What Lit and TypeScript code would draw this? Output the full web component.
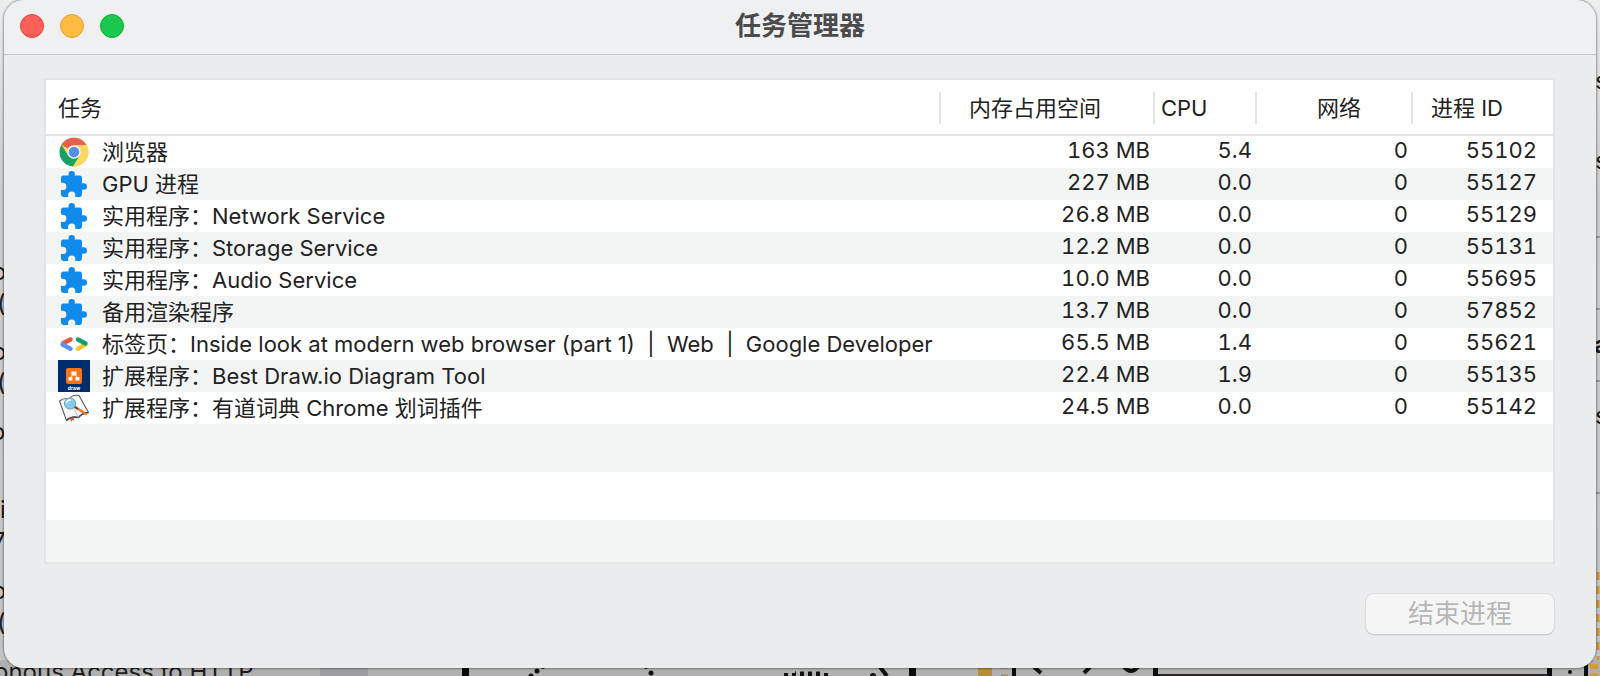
import { LitElement, html, svg, css } from "lit";
import { customElement } from "lit/decorators.js";

type IconName = "chrome" | "puzzle" | "dev" | "draw" | "dict";

interface Task {
  icon: IconName;
  name: string;
  memory: string;
  cpu: string;
  network: string;
  pid: string;
}

const TASKS: Task[] = [
  { icon: "chrome", name: "浏览器", memory: "163 MB", cpu: "5.4", network: "0", pid: "55102" },
  { icon: "puzzle", name: "GPU 进程", memory: "227 MB", cpu: "0.0", network: "0", pid: "55127" },
  { icon: "puzzle", name: "实用程序：Network Service", memory: "26.8 MB", cpu: "0.0", network: "0", pid: "55129" },
  { icon: "puzzle", name: "实用程序：Storage Service", memory: "12.2 MB", cpu: "0.0", network: "0", pid: "55131" },
  { icon: "puzzle", name: "实用程序：Audio Service", memory: "10.0 MB", cpu: "0.0", network: "0", pid: "55695" },
  { icon: "puzzle", name: "备用渲染程序", memory: "13.7 MB", cpu: "0.0", network: "0", pid: "57852" },
  { icon: "dev", name: "标签页：Inside look at modern web browser (part 1)  |  Web  |  Google Developer", memory: "65.5 MB", cpu: "1.4", network: "0", pid: "55621" },
  { icon: "draw", name: "扩展程序：Best Draw.io Diagram Tool", memory: "22.4 MB", cpu: "1.9", network: "0", pid: "55135" },
  { icon: "dict", name: "扩展程序：有道词典 Chrome 划词插件", memory: "24.5 MB", cpu: "0.0", network: "0", pid: "55142" },
];

const ICONS = {
  chrome: svg`
    <circle cx="16" cy="16" r="14.5" fill="#fdd65c"/>
    <path d="M16 16 L3.4 8.8 A14.5 14.5 0 0 1 28.6 9.2 L16 9.2 Z" fill="#e5604f"/>
    <path d="M3.4 8.8 A14.5 14.5 0 0 0 15 30.5 L22 19.2 L10 19 Z" fill="#14a566"/>
    <path d="M28.6 9.2 H16 L22 19.2 L15 30.5 A14.5 14.5 0 0 0 28.6 9.2 Z" fill="#fdd65c"/>
    <circle cx="16" cy="16" r="6.8" fill="#f5f5f5"/>
    <circle cx="16" cy="16" r="5.3" fill="#4f92f0"/>`,
  puzzle: svg`
    <path d="M5.4 7.600 H10.500 V6.300 A3.200 3.200 0 0 1 16.900 6.300 V7.600 H21.600 A2.400 2.400 0 0 1 24 10 V15.300 H25.800 A3.200 3.200 0 0 1 25.800 21.700 H24 V26.600 A2.400 2.400 0 0 1 21.600 29 H17.300 V27.200 A3.600 3.600 0 0 0 10.100 27.200 V29 H5.400 A2.400 2.400 0 0 1 3 26.600 V22.100 H4.700 A3.700 3.700 0 0 0 4.700 14.700 H3 V10 A2.400 2.400 0 0 1 5.400 7.600 Z" fill="#0f8bee"/>`,
  dev: svg`
    <g fill="none" stroke-width="4.400" stroke-linecap="round">
      <path d="M12.500 11.500 L5.500 15" stroke="#ea5545"/>
      <path d="M4.500 16.500 L12.500 20.800" stroke="#5596f5"/>
      <path d="M27.500 16.200 L20 20.800" stroke="#fcc629"/>
      <path d="M20 11.500 L27.500 15.500" stroke="#0aa566"/>
    </g>`,
  draw: svg`
    <rect width="32" height="32" fill="#002e6c"/>
    <rect x="8" y="8" width="16" height="16" rx="2" fill="#fb7314"/>
    <path d="M15 14 L12.500 18 M17 14 L19.500 18" stroke="#ffd9bd" stroke-width="1"/>
    <rect x="13.500" y="11.500" width="5" height="4" fill="#fff"/>
    <rect x="10.500" y="17" width="4" height="3.500" fill="#fff"/>
    <rect x="17.500" y="17" width="4" height="3.500" fill="#fff"/>
    <text x="16" y="29.500" text-anchor="middle" font-size="5" font-weight="700" fill="#fff">draw</text>`,
  dict: svg`
    <path d="M1.500 9 Q6 5.500 11 7 Q14.500 2.500 21 3.500 L30.500 20.500 Q24 21 20.500 25.500 Q13 24 8.500 28.500 Z" fill="#f8f8f8" stroke="#5c5c5c" stroke-width="1.100" stroke-linejoin="round"/>
    <path d="M8.500 28.500 Q13 24 20.500 25.500 Q24 21 30.500 20.500" fill="none" stroke="#4a4a4a" stroke-width="1.700"/>
    <path d="M11 7 L20.500 25.500" stroke="#c4c4c4" stroke-width="1"/>
    <path d="M12 26.300 L15.500 25.500 L16.500 29 L14.300 28 L13 30 Z" fill="#e4572e"/>
    <path d="M17 15 L28 22" stroke="#f0742c" stroke-width="2.600" stroke-linecap="round"/>
    <path d="M16 14.500 L20 17" stroke="#44515c" stroke-width="2"/>
    <circle cx="12" cy="11.500" r="5.600" fill="#84caf2" stroke="#7d9aad" stroke-width="1"/>
    <path d="M8.500 11 A4 4 0 0 1 13 8" stroke="#e5f6ff" stroke-width="1.800" fill="none"/>`,
};

@customElement("task-icon")
class TaskIcon extends LitElement {
  static properties = { name: { type: String } };
  declare name: IconName;

  static styles = css`
    :host { display: block; flex: none; width: 32px; height: 32px; }
    .glyph { display: block; width: 100%; height: 100%; font-family: Inter, sans-serif; }
  `;

  render() {
    return html`<svg class="glyph" viewBox="0 0 32 32" aria-hidden="true">${ICONS[this.name]}</svg>`;
  }
}

@customElement("desk-backdrop")
class DeskBackdrop extends LitElement {
  static styles = css`
    :host { display: block; }
    .scene { display: block; width: 100%; height: 100%; font-family: Inter, "Liberation Sans", sans-serif; }
  `;

  render() {
    return html`
      <svg class="scene" viewBox="0 0 1600 676" preserveAspectRatio="xMidYMax slice" aria-hidden="true">
        <defs>
          <linearGradient id="shade" x1="0" y1="0" x2="0" y2="1">
            <stop offset="0" stop-color="#ededed"/>
            <stop offset="0.25" stop-color="#cfcfcf"/>
            <stop offset="1" stop-color="#c4c4c4"/>
          </linearGradient>
        </defs>
        <rect width="1600" height="676" fill="url(#shade)"/>
        <rect y="660" width="1600" height="16" fill="#b0b0b0"/>
        <rect x="320" y="660" width="48" height="16" fill="#9c9ea1"/>
        <g font-size="24" fill="#1c1c1c">
          <text x="-8" y="280">o</text><text x="-3" y="312">(</text>
          <text x="-8" y="360">o</text><text x="-3" y="391">(</text>
          <text x="-9" y="440">o</text>
          <text x="0" y="518">i</text><text x="-8" y="550">7</text>
          <text x="-8" y="599">o</text><text x="-3" y="631">(</text>
          <text x="-6" y="680">onous Access to HTTP</text>
          <text x="1595" y="89">s</text><text x="1595" y="169">s</text>
          <text x="1594" y="353" font-weight="700">a</text><text x="1595" y="424">s</text>
        </g>
        <path d="M1596 237 H1600 M1596 309 H1600 M1596 381 H1600 M1596 493 H1600" stroke="#9a9a9a" stroke-width="2"/>
        <g fill="#0b0b0b">
          <rect x="462" y="667" width="7" height="9"/>
          <rect x="909" y="667" width="7" height="9"/>
          <rect x="1012" y="667" width="4" height="9"/>
          <rect x="1153" y="667" width="5" height="9"/>
          <rect x="1547" y="667" width="5" height="9"/>
          <rect x="1584" y="660" width="4" height="16"/>
        </g>
        <rect x="1158" y="674" width="390" height="2" fill="#29262b"/>
        <g fill="#111">
          <circle cx="531" cy="676" r="2.500"/><circle cx="537" cy="671" r="2.500"/><circle cx="543" cy="667" r="2"/>
          <circle cx="646" cy="667" r="2"/><circle cx="651" cy="673" r="2.500"/>
          <circle cx="873" cy="676" r="3"/><circle cx="1570" cy="672" r="2"/>
        </g>
        <path d="M784 675 H832" stroke="#111" stroke-width="4" stroke-dasharray="4 4"/>
        <path d="M795 673 H822" stroke="#111" stroke-width="3" stroke-dasharray="4 4" stroke-dashoffset="3"/>
        <g fill="none" stroke="#111" stroke-width="4">
          <path d="M880 667 L887 676 M1034 667 L1041 673 M1090 667 L1084 673 M1124 667 Q1131 675 1138 667"/>
        </g>
        <rect x="978" y="667" width="14" height="9" fill="#b98b34"/>
        <path d="M1001 667 H1008 M1001 676 H1008" stroke="#b98b34" stroke-width="3"/>
        <path d="M1598 572 V660" stroke="#cf9330" stroke-width="3" stroke-dasharray="8 6"/>
        <path d="M1594 664 V676" stroke="#d99a2e" stroke-width="8" stroke-dasharray="5 4"/>
      </svg>`;
  }
}

@customElement("app-root")
class AppRoot extends LitElement {
  static styles = css`
    :host {
      display: block;
      position: relative;
      overflow: hidden;
      min-height: 100vh;
      box-sizing: border-box;
      padding: 0 4px 8px;
      color: #222;
      font: 22px/32px Inter, "Noto Sans CJK SC", sans-serif;
    }
    *, *::before { box-sizing: border-box; }
    .backdrop { position: absolute; inset: 0; }
    .window {
      position: relative;
      display: flex;
      flex-direction: column;
      min-height: calc(100vh - 8px);
      border-radius: 20px;
      background: #ebecee;
      box-shadow: 0 0 2px 1px rgba(0, 0, 0, 0.35);
      overflow: hidden;
    }
    .titlebar {
      display: grid;
      grid-template-columns: 1fr auto 1fr;
      align-items: center;
      height: 55px;
      padding: 0 16px 2px;
      background: #eff0f2;
      border-bottom: 1px solid #c6c7c9;
    }
    .lights { display: flex; gap: 16px; }
    .light { width: 24px; height: 24px; padding: 0; border-radius: 50%; border: 1px solid; }
    .close { background: #ff5f57; border-color: #e2463f; }
    .minimize { background: #febc40; border-color: #dfa035; }
    .zoom { background: #19c84c; border-color: #12ac33; }
    .title { margin: 0; font-size: 26px; line-height: 32px; font-weight: 700; color: #4b4b4c; }
    .content { flex: 1; display: flex; flex-direction: column; padding: 23px 41px 34px 40px; }
    .frame { flex: 1; display: flex; flex-direction: column; border: 2px solid #e2e4e4; background: #fff; }
    .tasks { width: 100%; table-layout: fixed; border-collapse: separate; border-spacing: 0; }
    .col-memory { width: 214px; }
    .col-cpu { width: 102px; }
    .col-network { width: 156px; }
    .col-pid { width: 142px; }
    th { height: 56px; padding: 2px 0 0; border-bottom: 2px solid #e2e4e4; font-weight: 400; text-align: left; }
    .label { display: block; padding-left: 12px; }
    .label.memory, .label.cpu, .label.network, .label.pid { border-left: 2px solid #e2e4e4; }
    .label.memory { padding-left: 28px; }
    .label.cpu { padding-left: 6px; }
    .label.network { padding-left: 60px; }
    .label.pid { padding-left: 18px; }
    td { height: 32px; padding: 0 3px 4px 0; line-height: 28px; text-align: right; white-space: pre; font-variant-numeric: tabular-nums; }
    td.name { padding: 0; font-variant-numeric: normal; }
    td.pid { padding-right: 16px; }
    .task { display: flex; gap: 12px; padding-left: 12px; line-height: 32px; text-align: left; }
    .text { flex: 1; overflow: hidden; }
    tbody tr:nth-child(even) { background: #f3f5f4; }
    .blank {
      flex: 1;
      background: repeating-linear-gradient(#f3f5f4 0 48px, #fff 48px 96px);
    }
    .actions { display: flex; justify-content: flex-end; padding: 30px 1px 0 0; }
    .end {
      width: 188px;
      height: 40px;
      padding: 0;
      border: 0;
      border-radius: 8px;
      background: #f5f5f5;
      box-shadow: 0 0 1px 1px rgba(0, 0, 0, 0.06), 0 1px 2px rgba(0, 0, 0, 0.12);
      color: #b7b7b7;
      font: 26px/36px Inter, "Noto Sans CJK SC", sans-serif;
    }
  `;

  render() {
    return html`
      <desk-backdrop class="backdrop"></desk-backdrop>
      <main class="window">
        <header class="titlebar">
          <div class="lights">
            <button class="light close" aria-label="关闭"></button>
            <button class="light minimize" aria-label="最小化"></button>
            <button class="light zoom" aria-label="缩放"></button>
          </div>
          <h1 class="title">任务管理器</h1>
        </header>
        <section class="content">
          <div class="frame">
            <table class="tasks">
              <colgroup>
                <col><col class="col-memory"><col class="col-cpu"><col class="col-network"><col class="col-pid">
              </colgroup>
              <thead>
                <tr>
                  <th scope="col"><span class="label">任务</span></th>
                  <th scope="col"><span class="label memory">内存占用空间</span></th>
                  <th scope="col"><span class="label cpu">CPU</span></th>
                  <th scope="col"><span class="label network">网络</span></th>
                  <th scope="col"><span class="label pid">进程 ID</span></th>
                </tr>
              </thead>
              <tbody>
                ${TASKS.map(
                  (t) => html`<tr>
                    <td class="name"><div class="task"><task-icon .name=${t.icon}></task-icon><span class="text">${t.name}</span></div></td>
                    <td>${t.memory}</td>
                    <td>${t.cpu}</td>
                    <td>${t.network}</td>
                    <td class="pid">${t.pid}</td>
                  </tr>`
                )}
              </tbody>
            </table>
            <div class="blank"></div>
          </div>
          <div class="actions"><button class="end" disabled>结束进程</button></div>
        </section>
      </main>`;
  }
}
